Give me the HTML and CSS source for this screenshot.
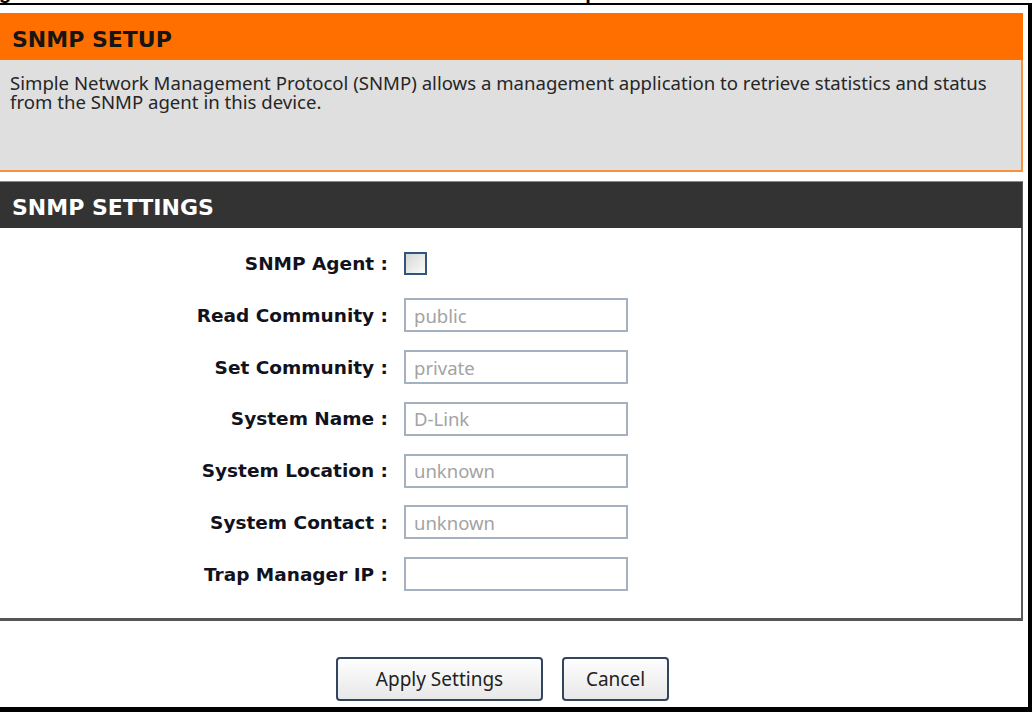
FILE: index.html
```html
<!DOCTYPE html>
<html lang="en">
<head>
<meta charset="utf-8">
<title>SNMP Setup</title>
<link rel="stylesheet" href="styles.css">
</head>
<body>
<div class="caption"><div class="caption-text"><span class="cap-g">g</span><span class="cap-p">p</span></div></div>
<div class="frame">
  <div class="content">
    <section class="setup">
      <h2 class="box-title setup-title">SNMP SETUP</h2>
      <p class="desc">Simple Network Management Protocol (SNMP) allows a management application to retrieve statistics and status from the SNMP agent in this device.</p>
    </section>
    <section class="settings">
      <h2 class="box-title settings-title">SNMP SETTINGS</h2>
      <div class="form">
        <label class="lbl">SNMP Agent :</label>
        <div class="field"><input type="checkbox" class="chk"></div>
        <label class="lbl">Read Community :</label>
        <div class="field"><input type="text" class="txt" value="public"></div>
        <label class="lbl">Set Community :</label>
        <div class="field"><input type="text" class="txt" value="private"></div>
        <label class="lbl">System Name :</label>
        <div class="field"><input type="text" class="txt" value="D-Link"></div>
        <label class="lbl">System Location :</label>
        <div class="field"><input type="text" class="txt" value="unknown"></div>
        <label class="lbl">System Contact :</label>
        <div class="field"><input type="text" class="txt" value="unknown"></div>
        <label class="lbl">Trap Manager IP :</label>
        <div class="field"><input type="text" class="txt" value=""></div>
      </div>
    </section>
    <div class="actions">
      <button type="button" class="btn apply">Apply Settings</button>
      <button type="button" class="btn cancel">Cancel</button>
    </div>
  </div>
</div>
</body>
</html>
```
FILE: styles.css
```css
* { box-sizing: border-box; }

html, body {
  margin: 0;
  padding: 0;
  background: #fff;
}

body {
  width: 1032px;
  height: 712px;
  overflow: hidden;
  font-family: "Noto Sans", "DejaVu Sans", sans-serif;
}

.caption {
  height: 3px;
  overflow: hidden;
}

.caption-text {
  display: flex;
  margin-top: -18px;
  font: bold 20px/20px "Liberation Sans", Arial, sans-serif;
  color: #000;
}

.cap-g { margin-left: -1px; }
.cap-p { margin-left: 574px; }

.frame {
  height: 709px;
  border-top: 2px solid #000;
  border-right: 4px solid #000;
  border-bottom: 5px solid #000;
  padding: 8px 5px 0 0;
}

.content {
  display: flex;
  flex-direction: column;
}

.box-title {
  margin: 0;
  height: 47px;
  padding-left: 12px;
  font: bold 22px/41px "DejaVu Sans", sans-serif;
}

.setup-title {
  background: #ff6f00;
  color: #151515;
  padding-top: 6px;
}

.desc {
  margin: 0;
  height: 112px;
  background: #dfdfdf;
  border-right: 2px solid #f7913d;
  border-bottom: 2px solid #f7913d;
  padding: 14px 8px 0 10px;
  font-size: 18.6px;
  line-height: 18.5px;
  color: #262626;
}

.settings {
  margin-top: 9px;
}

.settings-title {
  background: #333;
  color: #fff;
  border-top: 1px solid #8c8c8c;
  border-right: 1px solid #555;
  padding-top: 5px;
}

.form {
  display: grid;
  grid-template-columns: 388px 224px;
  grid-auto-rows: 34px;
  column-gap: 16px;
  row-gap: 17.8px;
  align-items: center;
  padding: 18.5px 0 26.7px;
  border-right: 2px solid #5a5a5a;
  border-bottom: 3px solid #555;
}

.lbl {
  text-align: right;
  font: bold 18.5px "DejaVu Sans", sans-serif;
  color: #12121c;
  white-space: nowrap;
}

.field {
  display: flex;
  align-items: center;
}

.txt {
  width: 224px;
  height: 34px;
  margin: 0;
  border: 2px solid #a6b1bf;
  padding: 0 8px;
  background: #fff;
  font-family: "Noto Sans", "DejaVu Sans", sans-serif;
  font-size: 18.5px;
  color: #a3a3a3;
  outline: none;
}

.chk {
  appearance: none;
  -webkit-appearance: none;
  width: 23px;
  height: 23px;
  margin: 0;
  border: 2px solid #34557a;
  background: linear-gradient(135deg, #d6d6d2, #fbfbfb);
}

.actions {
  display: flex;
  justify-content: center;
  gap: 19px;
  padding: 36px 18px 0 0;
}

.btn {
  height: 44px;
  padding: 0;
  border: 2px solid #33445e;
  border-radius: 4px;
  background: linear-gradient(#fefefe, #e8e8e8);
  font-family: "Noto Sans", "DejaVu Sans", sans-serif;
  font-size: 19px;
  color: #222;
}

.apply { width: 207px; }
.cancel { width: 107px; }
```
